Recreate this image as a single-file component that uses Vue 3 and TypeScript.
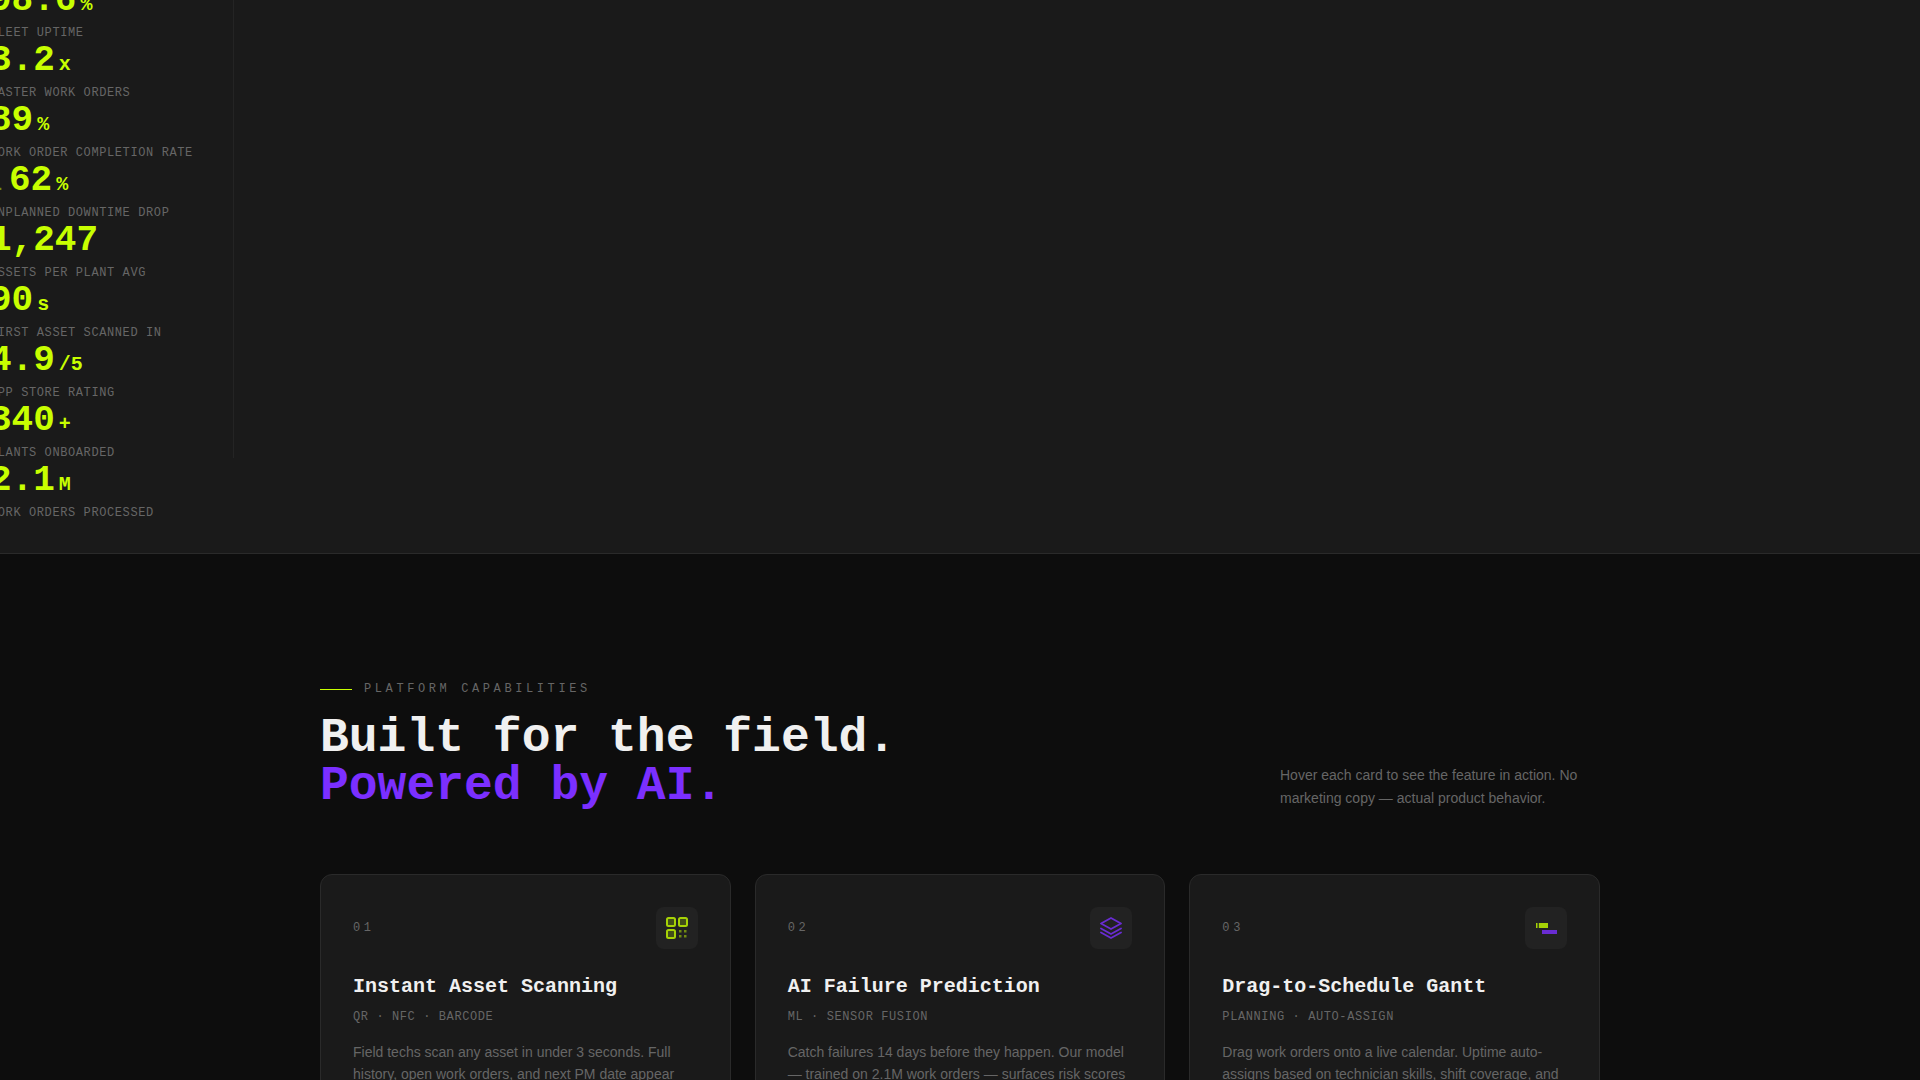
<template>
  <div class="page">
    <section class="stats-strip">
      <div class="ticker">
        <div class="ticker-list">
          <div v-for="stat in stats" :key="stat.label" class="stat">
            <div class="stat-value"><span v-if="stat.prefix" class="stat-prefix">{{ stat.prefix }}</span>{{ stat.value }}<span class="stat-unit">{{ stat.unit }}</span></div>
            <div class="stat-label">{{ stat.label }}</div>
          </div>
        </div>
      </div>
    </section>

    <section class="features">
      <div class="container">
        <header class="features-head">
          <div>
            <div class="eyebrow"><span class="eyebrow-line" />PLATFORM CAPABILITIES</div>
            <h2 class="title">Built for the field.<br /><span class="title-accent">Powered by AI.</span></h2>
          </div>
          <p class="intro">Hover each card to see the feature in action. No marketing copy — actual product behavior.</p>
        </header>

        <div class="cards">
          <article v-for="card in cards" :key="card.num" class="card">
            <div class="card-top">
              <span class="card-num">{{ card.num }}</span>
              <div class="card-icon">
                <svg v-if="card.icon === 'qr'" width="22" height="22" viewBox="0 0 22 22">
                  <g fill="#c8ff00" fill-opacity="0.25" stroke="#c8ff00" stroke-width="2">
                    <rect x="1" y="1" width="8" height="8" rx="1.5" />
                    <rect x="13" y="1" width="8" height="8" rx="1.5" />
                    <rect x="1" y="13" width="8" height="8" rx="1.5" />
                  </g>
                  <g fill="#c8ff00" opacity="0.6">
                    <rect x="13" y="13" width="2.5" height="2.5" />
                    <rect x="18" y="13" width="2.5" height="2.5" />
                    <rect x="13" y="18" width="2.5" height="2.5" />
                    <rect x="18" y="18" width="2.5" height="2.5" />
                  </g>
                </svg>
                <svg v-else-if="card.icon === 'layers'" width="22" height="22" viewBox="0 0 22 22">
                  <g fill="none" stroke="#7b2fff" stroke-width="1.8" stroke-linejoin="round" stroke-linecap="round">
                    <path d="M11 1 L21 6.5 L11 12 L1 6.5 Z" />
                    <path d="M1 11.5 L11 17 L21 11.5" />
                    <path d="M1 15.5 L11 21 L21 15.5" />
                  </g>
                </svg>
                <svg v-else width="22" height="22" viewBox="0 0 22 22">
                  <rect x="1" y="6" width="12" height="5" fill="#c8ff00" />
                  <rect x="2.4" y="6" width="1.6" height="5" fill="#222" opacity="0.8" />
                  <rect x="7" y="13" width="15" height="4" fill="#7b2fff" />
                </svg>
              </div>
            </div>
            <h3 class="card-title">{{ card.title }}</h3>
            <div class="card-tags">{{ card.tags }}</div>
            <p class="card-text">{{ card.text }}</p>
          </article>
        </div>
      </div>
    </section>
  </div>
</template>

<script setup lang="ts">
interface Stat {
  prefix?: string;
  value: string;
  unit: string;
  label: string;
}

interface Card {
  num: string;
  icon: 'qr' | 'layers' | 'gantt';
  title: string;
  tags: string;
  text: string;
}

const stats: Stat[] = [
  { value: '98.6', unit: '%', label: 'FLEET UPTIME' },
  { value: '3.2', unit: 'x', label: 'FASTER WORK ORDERS' },
  { value: '89', unit: '%', label: 'WORK ORDER COMPLETION RATE' },
  { prefix: '.', value: '62', unit: '%', label: 'UNPLANNED DOWNTIME DROP' },
  { value: '1,247', unit: '', label: 'ASSETS PER PLANT AVG' },
  { value: '90', unit: 's', label: 'FIRST ASSET SCANNED IN' },
  { value: '4.9', unit: '/5', label: 'APP STORE RATING' },
  { value: '340', unit: '+', label: 'PLANTS ONBOARDED' },
  { value: '2.1', unit: 'M', label: 'WORK ORDERS PROCESSED' },
];

const cards: Card[] = [
  {
    num: '01',
    icon: 'qr',
    title: 'Instant Asset Scanning',
    tags: 'QR · NFC · BARCODE',
    text: 'Field techs scan any asset in under 3 seconds. Full history, open work orders, and next PM date appear',
  },
  {
    num: '02',
    icon: 'layers',
    title: 'AI Failure Prediction',
    tags: 'ML · SENSOR FUSION',
    text: 'Catch failures 14 days before they happen. Our model — trained on 2.1M work orders — surfaces risk scores',
  },
  {
    num: '03',
    icon: 'gantt',
    title: 'Drag-to-Schedule Gantt',
    tags: 'PLANNING · AUTO-ASSIGN',
    text: 'Drag work orders onto a live calendar. Uptime auto-assigns based on technician skills, shift coverage, and',
  },
];
</script>

<style>
html,
body {
  background: #0d0d0d;
  overflow: hidden;
}
</style>

<style scoped>
.page {
  height: 1080px;
  overflow: hidden;
  background: #0d0d0d;
  font-family: "Liberation Sans", Arial, sans-serif;
}

.stats-strip {
  height: 553px;
  background: #1a1a1a;
  border-bottom: 1px solid #2a2a2a;
  overflow: hidden;
}

.ticker {
  display: flow-root;
  width: 233px;
  height: 458px;
  border-right: 1px solid #242424;
}

.ticker-list {
  margin: -19px 0 0 -10px;
  white-space: nowrap;
}

.stat {
  height: 60px;
  font-family: "Liberation Mono", monospace;
}

.stat-value {
  font-size: 36px;
  font-weight: 700;
  line-height: 39px;
  color: #c8ff00;
}

.stat-prefix {
  display: inline-block;
  width: 19px;
  font-size: 14px;
  line-height: 1;
  text-indent: 6px;
  opacity: 0.5;
}

.stat-unit {
  margin-left: 4px;
  font-size: 20px;
}

.stat-label {
  font-size: 12px;
  letter-spacing: 0.05em;
  line-height: 19px;
  color: #666;
}

.features {
  padding: 128px 0 0;
}

.container {
  width: 1280px;
  margin: 0 auto;
}

.features-head {
  display: flex;
  justify-content: space-between;
  align-items: flex-end;
  margin-bottom: 64px;
}

.eyebrow {
  display: flex;
  align-items: center;
  gap: 12px;
  margin-bottom: 18px;
  font-family: "Liberation Mono", monospace;
  font-size: 12px;
  letter-spacing: 0.3em;
  color: #666;
}

.eyebrow-line {
  width: 32px;
  height: 1px;
  background: #c8ff00;
}

.title {
  margin: 0;
  font-family: "Liberation Mono", monospace;
  font-size: 48px;
  font-weight: 700;
  line-height: 1;
  color: #f0f0f0;
}

.title-accent {
  color: #7b2fff;
}

.intro {
  width: 320px;
  margin: 0 0 1px;
  font-size: 14px;
  line-height: 1.6;
  color: #666;
}

.cards {
  display: grid;
  grid-template-columns: repeat(3, 1fr);
  gap: 24px;
}

.card {
  padding: 32px;
  background: #1a1a1a;
  border: 1px solid #2a2a2a;
  border-radius: 12px;
}

.card-top {
  display: flex;
  justify-content: space-between;
  align-items: center;
  margin-bottom: 26px;
}

.card-num {
  font-family: "Liberation Mono", monospace;
  font-size: 12px;
  letter-spacing: 0.3em;
  color: #666;
}

.card-icon {
  display: flex;
  align-items: center;
  justify-content: center;
  width: 42px;
  height: 42px;
  background: #222;
  border-radius: 8px;
}

.card-icon svg {
  opacity: 0.8;
}

.card-title {
  margin: 0 0 12px;
  font-family: "Liberation Mono", monospace;
  font-size: 20px;
  font-weight: 700;
  color: #f0f0f0;
}

.card-tags {
  margin-bottom: 17px;
  font-family: "Liberation Mono", monospace;
  font-size: 12px;
  letter-spacing: 0.05em;
  color: #666;
}

.card-text {
  margin: 0;
  font-size: 14px;
  line-height: 1.6;
  color: #666;
}
</style>
